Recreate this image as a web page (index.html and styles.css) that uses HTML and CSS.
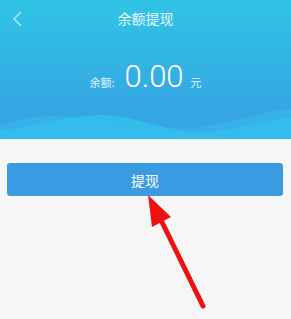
FILE: index.html
```html
<!DOCTYPE html>
<html lang="zh">
<head>
    <meta charset="UTF-8">
    <title>余额提现</title>
    <link rel="stylesheet" href="styles.css">
</head>
<body>
    <div class="header">
        <div class="nav">
            <svg class="back" width="12" height="18" viewBox="0 0 12 18">
                <path d="M10 2 L3 9 L10 16" fill="none" stroke="#bfeefa" stroke-width="1.3"/>
            </svg>
            <span class="title">余额提现</span>
        </div>
        <div class="balance">
            <span class="label">余额:</span>
            <span class="amount">0.00</span>
            <span class="unit">元</span>
        </div>
        <svg class="waves" width="291" height="34" viewBox="0 0 291 34" preserveAspectRatio="none">
            <path d="M0 20 C40 8 70 10 100 14 C140 20 170 26 200 22 C240 16 265 6 291 4 L291 34 L0 34 Z" fill="#39b6e8" opacity="0.7"/>
            <path d="M0 26 C30 22 60 12 100 10 C130 9 160 24 190 27 C220 30 250 18 291 12 L291 34 L0 34 Z" fill="#33c0ee" opacity="0.8"/>
        </svg>
    </div>
    <div class="content">
        <button class="btn">提现</button>
    </div>
    <svg class="arrow" width="291" height="319" viewBox="0 0 291 319">
        <line x1="161" y1="220" x2="203" y2="306" stroke="#ee1111" stroke-width="5" stroke-linecap="round"/>
        <polygon points="148,195 152,227 171,217" fill="#ee1111"/>
    </svg>
</body>
</html>
```

FILE: styles.css
```css
body {
    margin: 0;
    font-family: 'Noto Sans CJK SC', Roboto, sans-serif;
    background-color: #f6f6f6;
    width: 291px;
    height: 319px;
    overflow: hidden;
    position: relative;
}

.header {
    height: 139px;
    background: linear-gradient(to bottom, #30c4e4, #35a6e4 80%, #35a4e4);
    position: relative;
    overflow: hidden;
}

.nav {
    height: 36px;
    display: flex;
    align-items: center;
    justify-content: center;
    position: relative;
}

.back {
    position: absolute;
    left: 11px;
    top: 10px;
}

.title {
    color: #eafaff;
    font-size: 14px;
}

.balance {
    display: flex;
    align-items: baseline;
    justify-content: center;
    color: #fff;
    margin-top: 22px;
    margin-left: 0;
}

.label {
    font-size: 11px;
    color: #e2f6ff;
}

.amount {
    font-family: Roboto, sans-serif;
    font-weight: 300;
    font-size: 31px;
    margin: 0 7px 0 10px;
}

.unit {
    font-size: 11px;
    color: #e2f6ff;
}

.waves {
    position: absolute;
    left: 0;
    bottom: 0;
}

.content {
    padding: 24px 8px 0 7px;
}

.btn {
    width: 100%;
    height: 33px;
    border: none;
    border-radius: 3px;
    background-color: #3a9be2;
    color: #fff;
    font-size: 14px;
    font-family: 'Noto Sans CJK SC', sans-serif;
}

.arrow {
    position: absolute;
    left: 0;
    top: 0;
}
```
